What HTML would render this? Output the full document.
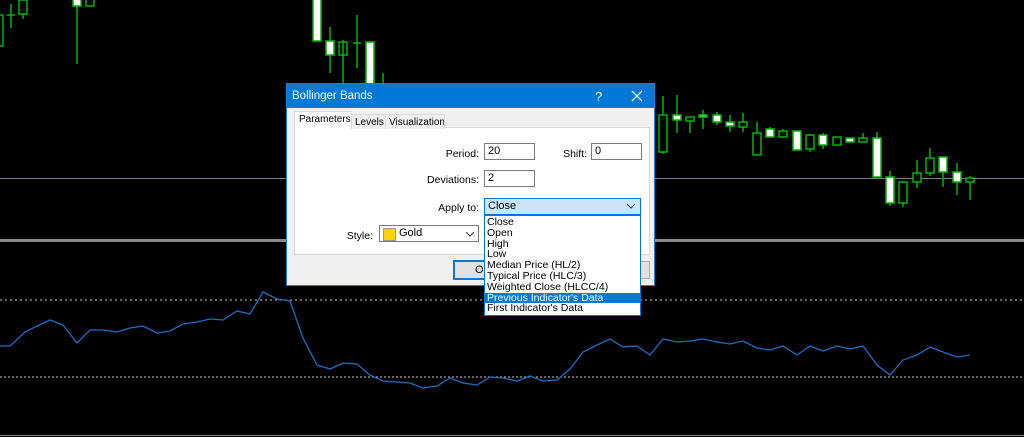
<!DOCTYPE html>
<html><head><meta charset="utf-8"><style>
body{margin:0;width:1024px;height:437px;background:#000;overflow:hidden;position:relative;font-family:"Liberation Sans",Arial,sans-serif;font-size:11px;color:#000}
.abs{position:absolute}
.dlg{left:286px;top:83px;width:367px;height:201px;background:#f0f0f0;border:1px solid #1883d7}
.tb{left:0;top:0;width:367px;height:24px;background:#0078d7;color:#fff;font-size:11.5px}
.inp{background:#fff;border:1px solid #7a7a7a;height:15px;line-height:15px;padding-left:3px;box-sizing:content-box}
.lbl{text-align:right;font-size:10.5px}
.dd div{height:10.8px;line-height:11px;padding-left:2px;font-size:10.5px}
.tab{font-size:10px;white-space:nowrap;overflow:hidden}
</style></head><body>
<svg class="abs" style="left:0;top:0" width="1024" height="437">
<line x1="0" y1="178.5" x2="1024" y2="178.5" stroke="#6f7f8f" stroke-width="1"/>
<rect x="0" y="239" width="1024" height="3" fill="#8a8a8a"/>
<line x1="0" y1="300" x2="1024" y2="300" stroke="#ccc" stroke-dasharray="2,3"/>
<line x1="0" y1="377" x2="1024" y2="377" stroke="#ccc" stroke-dasharray="2,2"/>
<line x1="0" y1="435.5" x2="1024" y2="435.5" stroke="#888"/>
<g stroke="#00b400" stroke-width="1.5" fill="none">
<line x1="11" y1="4" x2="11" y2="28"/><line x1="7" y1="15" x2="15" y2="15"/>
<rect x="-3" y="15" width="6" height="31"/>
<line x1="23" y1="14" x2="23" y2="19"/><rect x="19" y="0" width="8" height="14"/>
<line x1="77" y1="6" x2="77" y2="64"/><rect x="73" y="-2" width="8" height="8" fill="#fff"/>
<rect x="86" y="-2" width="8" height="8"/>
<rect x="313" y="-2" width="8" height="43" fill="#fff"/>
<line x1="330" y1="27" x2="330" y2="73"/><rect x="326" y="41" width="8" height="14" fill="#fff"/>
<line x1="343" y1="40" x2="343" y2="85"/><rect x="339" y="42" width="8" height="13"/>
<line x1="357" y1="15" x2="357" y2="68"/><line x1="353" y1="43" x2="361" y2="43"/>
<rect x="366" y="42" width="8" height="42" fill="#fff"/>
<line x1="383" y1="73" x2="383" y2="90"/>
<line x1="663" y1="96" x2="663" y2="154"/><rect x="659" y="115" width="8" height="37" fill="#000"/>
<line x1="677" y1="95" x2="677" y2="133"/><rect x="673" y="115" width="8" height="5" fill="#fff"/>
<line x1="690" y1="117" x2="690" y2="133"/><rect x="686" y="117" width="8" height="4" fill="#000"/>
<line x1="703" y1="110" x2="703" y2="129"/><rect x="699" y="115" width="8" height="2" fill="#fff"/>
<line x1="717" y1="112" x2="717" y2="125"/><rect x="713" y="115" width="8" height="7" fill="#fff"/>
<line x1="730" y1="115" x2="730" y2="132"/><rect x="726" y="122" width="8" height="4" fill="#fff"/>
<line x1="743" y1="113" x2="743" y2="132"/><rect x="739" y="122" width="8" height="5" fill="#000"/>
<line x1="757" y1="122" x2="757" y2="155"/><rect x="753" y="133" width="8" height="22" fill="#000"/>
<line x1="770" y1="127" x2="770" y2="137"/><rect x="766" y="129" width="8" height="8" fill="#fff"/>
<line x1="783" y1="129" x2="783" y2="137"/><rect x="779" y="131" width="8" height="6" fill="#000"/>
<rect x="793" y="131" width="8" height="19" fill="#fff"/>
<line x1="810" y1="134" x2="810" y2="152"/><rect x="806" y="135" width="8" height="14" fill="#000"/>
<line x1="823" y1="133" x2="823" y2="149"/><rect x="819" y="135" width="8" height="10" fill="#fff"/>
<rect x="833" y="137" width="8" height="8" fill="#000"/>
<rect x="846" y="138" width="8" height="4" fill="#fff"/>
<line x1="863" y1="133" x2="863" y2="142"/><rect x="859" y="138" width="8" height="4" fill="#000"/>
<line x1="877" y1="132" x2="877" y2="177"/><rect x="873" y="138" width="8" height="39" fill="#fff"/>
<line x1="890" y1="171" x2="890" y2="206"/><rect x="886" y="177" width="8" height="26" fill="#fff"/>
<line x1="903" y1="181" x2="903" y2="207"/><rect x="899" y="182" width="8" height="21" fill="#000"/>
<line x1="917" y1="160" x2="917" y2="188"/><rect x="913" y="173" width="8" height="9" fill="#000"/>
<line x1="930" y1="148" x2="930" y2="176"/><rect x="926" y="158" width="8" height="15" fill="#000"/>
<line x1="943" y1="157" x2="943" y2="187"/><rect x="939" y="157" width="8" height="15" fill="#fff"/>
<line x1="957" y1="163" x2="957" y2="195"/><rect x="953" y="172" width="8" height="10" fill="#fff"/>
<line x1="970" y1="176" x2="970" y2="200"/><rect x="966" y="178" width="8" height="4" fill="#000"/>
</g>
<polyline fill="none" stroke="#1a6fc4" stroke-width="1.3" points="0,346 10,346 25,332 35,327 50,320 63,325 77,343 90,330 103,330 117,332 130,328 143,326 157,333 170,331 183,324 197,322 210,319 223,320 237,311 250,314 263,292 277,299 290,301 303,338 317,365 330,369 343,363 357,364 370,375 383,381 397,382 410,383 423,388 437,386 450,378 463,383 477,385 490,377 503,378 517,381 530,376 543,381 557,380 570,369 583,352 597,345 610,339 623,347 637,346 650,355 663,339 677,342 690,341 703,339 717,342 730,344 743,341 757,348 770,350 783,346 797,355 810,346 823,351 837,346 850,349 863,346 877,365 890,375 903,360 917,355 930,347 943,352 957,357 970,355"/>
</svg>

<div class="abs dlg">
 <div class="abs tb"><span class="abs" style="left:5px;top:6px">Bollinger Bands</span><span class="abs" style="left:308px;top:5px;font-size:13px">?</span>
 <svg class="abs" style="left:344px;top:6px" width="12" height="12"><path d="M1 1L11 11M11 1L1 11" stroke="#fff" stroke-width="1.3"/></svg></div>
 <div class="abs" style="left:7px;top:43px;width:354px;height:126px;background:#fff;border:1px solid #d9d9d9"></div>
 <div class="abs tab" style="left:7px;top:27px;width:52px;height:17px;background:#fff;border:1px solid #d9d9d9;border-bottom:none;padding-left:4px;line-height:16px">Parameters</div>
 <div class="abs tab" style="left:64px;top:30px;width:31px;height:14px;border:1px solid #d9d9d9;border-bottom:none;padding-left:3px;line-height:15px;background:#f0f0f0">Levels</div>
 <div class="abs tab" style="left:98px;top:30px;width:55px;height:14px;border:1px solid #d9d9d9;border-bottom:none;padding-left:3px;line-height:15px;background:#f0f0f0">Visualization</div>
 <div class="abs lbl" style="left:120px;top:64px;width:72px">Period:</div>
 <div class="abs inp" style="left:197px;top:59px;width:46px">20</div>
 <div class="abs lbl" style="left:250px;top:64px;width:50px">Shift:</div>
 <div class="abs inp" style="left:304px;top:59px;width:46px">0</div>
 <div class="abs lbl" style="left:120px;top:90px;width:72px">Deviations:</div>
 <div class="abs inp" style="left:197px;top:86px;width:46px">2</div>
 <div class="abs lbl" style="left:120px;top:118px;width:72px">Apply to:</div>
 <div class="abs" style="left:197px;top:114px;width:152px;height:15px;background:#cce4f7;border:1px solid #0078d7;padding-left:3px;line-height:15px">Close<svg class="abs" style="left:142px;top:5px" width="8" height="5"><path d="M0 0L4 4L8 0" stroke="#333" fill="none"/></svg></div>
 <div class="abs lbl" style="left:40px;top:146px;width:46px">Style:</div>
 <div class="abs inp" style="left:92px;top:141px;width:95px;padding-left:3px"><span class="abs" style="left:3px;top:2px;width:11px;height:11px;background:#ffd200;border:1px solid #999"></span><span class="abs" style="left:19px;top:0">Gold</span><svg class="abs" style="left:86px;top:6px" width="8" height="5"><path d="M0 0L4 4L8 0" stroke="#333" fill="none"/></svg></div>
 <div class="abs" style="left:166px;top:176px;width:34px;height:16px;background:#e1e1e1;border:2px solid #0078d7;padding-left:20px;line-height:16px">OK</div>
 <div class="abs" style="left:340px;top:177px;width:21px;height:16px;background:#e1e1e1;border:1px solid #adadad"></div>
</div>
<div class="abs dd" style="left:484px;top:215px;width:155px;height:98px;background:#fff;border:1px solid #0078d7;padding-top:1px">
<div>Close</div><div>Open</div><div>High</div><div>Low</div><div>Median Price (HL/2)</div><div>Typical Price (HLC/3)</div><div>Weighted Close (HLCC/4)</div><div style="background:#0078d7;color:#fff">Previous Indicator's Data</div><div>First Indicator's Data</div>
</div>
</body></html>
